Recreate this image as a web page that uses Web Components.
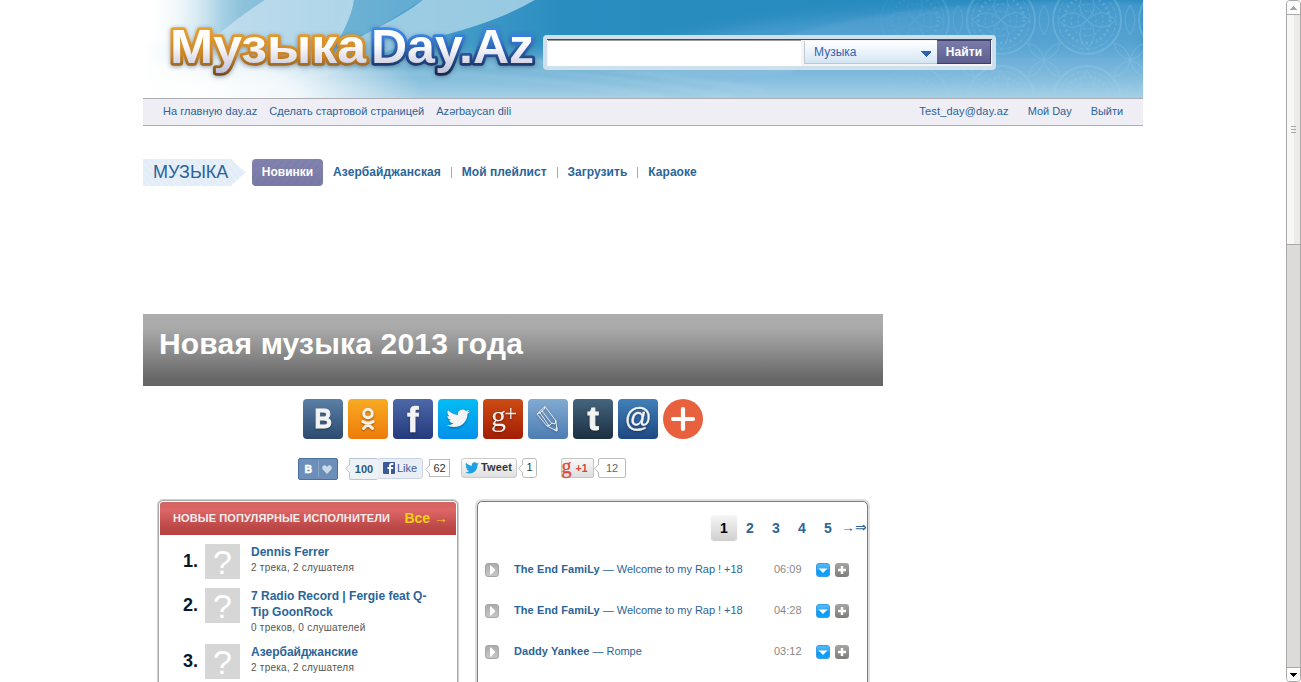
<!DOCTYPE html>
<html lang="ru">
<head>
<meta charset="utf-8">
<title>Новая музыка 2013 года</title>
<style>
html,body{margin:0;height:100%;overflow:hidden;background:#fff}
body{font:11px "Liberation Sans",Arial,sans-serif;color:#2b6498}
</style>
</head>
<body>
<music-page></music-page>
<script>
const BIRD='M23.953 4.57a10 10 0 01-2.825.775 4.958 4.958 0 002.163-2.723c-.951.555-2.005.959-3.127 1.184a4.92 4.92 0 00-8.384 4.482C7.69 8.095 4.067 6.13 1.64 3.162a4.822 4.822 0 00-.666 2.475c0 1.71.87 3.213 2.188 4.096a4.904 4.904 0 01-2.228-.616v.06a4.923 4.923 0 003.946 4.827 4.996 4.996 0 01-2.212.085 4.936 4.936 0 004.604 3.417 9.867 9.867 0 01-6.102 2.105c-.39 0-.779-.023-1.17-.067a13.995 13.995 0 007.557 2.209c9.053 0 13.998-7.496 13.998-13.985 0-.21 0-.42-.015-.63A9.935 9.935 0 0024 4.59z';

function define(name, html){
  customElements.define(name, class extends HTMLElement{
    constructor(){
      super();
      const t=document.createElement('template');
      t.innerHTML=typeof html==='function'?html(this):html;
      this.attachShadow({mode:'open'}).append(t.content.cloneNode(true));
    }
  });
}

define('site-banner',`
<style>
:host{display:grid;height:98px;width:1000px}
:host>*{grid-area:1/1}
.front{display:flex;align-items:flex-start}
.logo{flex:none;display:block;width:400px;height:98px;overflow:visible}
svg{display:block}
</style>
<svg width="1000" height="98" viewBox="0 0 1000 98">
<defs>
<linearGradient id="base"><stop offset="0" stop-color="#fff"/><stop offset=".04" stop-color="#d5eaf3"/><stop offset=".1" stop-color="#8cc2dc"/><stop offset=".28" stop-color="#4a9fcb"/><stop offset=".42" stop-color="#2a8dc0"/><stop offset="1" stop-color="#2489bd"/></linearGradient>
<linearGradient id="low" x1="0" y1="0" x2="0" y2="1"><stop offset="0" stop-color="#3f9bca" stop-opacity="0"/><stop offset=".4" stop-color="#3f9bca" stop-opacity="0"/><stop offset=".62" stop-color="#7fbad9" stop-opacity=".7"/><stop offset="1" stop-color="#a6d0e5"/></linearGradient>
<linearGradient id="right" x1="0" y1="0" x2="0" y2="1"><stop offset="0" stop-color="#4c9dd0"/><stop offset=".5" stop-color="#66abd8"/><stop offset=".8" stop-color="#86bee0"/><stop offset="1" stop-color="#a8d2e7"/></linearGradient>
<linearGradient id="fade"><stop offset="0" stop-color="#fff"/><stop offset=".3" stop-color="#fff" stop-opacity=".7"/><stop offset="1" stop-color="#fff" stop-opacity="0"/></linearGradient>
<linearGradient id="mfade"><stop offset="0" stop-color="#fff" stop-opacity="0"/><stop offset=".35" stop-color="#fff" stop-opacity=".7"/><stop offset="1" stop-color="#fff"/></linearGradient>
<radialGradient id="glow"><stop offset="0" stop-color="#fff"/><stop offset=".45" stop-color="#fff" stop-opacity=".85"/><stop offset="1" stop-color="#fff" stop-opacity="0"/></radialGradient>
<mask id="m"><rect x="720" width="280" height="98" fill="url(#mfade)"/></mask>
<filter id="b" x="-20%" y="-50%" width="140%" height="200%"><feGaussianBlur stdDeviation="7"/></filter>
<filter id="b2" x="-20%" y="-50%" width="140%" height="200%"><feGaussianBlur stdDeviation="2"/></filter>
<pattern id="orn" width="86" height="80" x="815" y="-20" patternUnits="userSpaceOnUse">
<g fill="none" stroke="#9dd3e8" stroke-width="1">
<circle cx="43" cy="40" r="34" stroke-width="2"/><circle cx="43" cy="40" r="29" stroke-dasharray="5 2"/><circle cx="43" cy="40" r="16" stroke-dasharray="3 2"/><circle cx="43" cy="40" r="9" stroke-dasharray="3 2"/><circle cx="43" cy="40" r="23" stroke-dasharray="2 3" stroke-width="3"/>
<path d="M43 11Q58 26 43 40Q28 26 43 11M43 69Q58 54 43 40Q28 54 43 69M14 40Q28 25 43 40Q28 55 14 40M72 40Q58 25 43 40Q58 55 72 40M0 0Q14 4 16 17Q3 14 0 0M86 0Q72 4 70 17Q83 14 86 0M0 80Q14 76 16 63Q3 66 0 80M86 80Q72 76 70 63Q83 66 86 80M0 25Q10 40 0 55M86 25Q76 40 86 55"/>
</g></pattern>
</defs>
<rect width="1000" height="98" fill="url(#base)"/>
<path d="M205 -2H282L236 27Q200 60 190 98H60Q190 60 205 -2Z" fill="#6fb4d6" opacity=".6"/>
<path d="M282 -2H395Q350 26 262 44L130 98Q190 50 236 27Q266 12 282 -2Z" fill="#a9d4e8" opacity=".85"/>
<path d="M78 32Q105 10 125 -2H211Q210 16 192 46Q150 82 100 98H0V60Z" fill="#cfe6f2" opacity=".7"/>
<rect width="1000" height="98" fill="url(#low)"/>
<path d="M520 44Q640 14 770 9Q880 2 1000 2V98H520Z" fill="url(#right)" opacity=".55" filter="url(#b)"/>
<path d="M640 36Q740 9 860 4Q940 0 1000 3V98H560Z" fill="url(#right)" opacity=".6" filter="url(#b2)"/>
<g fill="none" stroke="#b8dbea" stroke-width="3" opacity=".3" filter="url(#b2)"><path d="M230 50Q400 58 620 90M250 62Q420 65 590 98M150 75Q350 65 520 98M390 60Q500 78 650 70"/></g>
<rect x="720" width="280" height="98" fill="url(#orn)" mask="url(#m)" opacity=".3"/>
<ellipse cx="50" cy="92" rx="230" ry="60" fill="url(#glow)"/>
<rect width="80" height="98" fill="url(#fade)"/>
</svg>
<div class="front">
<svg class="logo" viewBox="0 0 400 98" font-family="Liberation Sans" font-weight="700" font-size="48">
<defs>
<linearGradient id="o" gradientUnits="userSpaceOnUse" x1="0" y1="25" x2="0" y2="76"><stop offset="0" stop-color="#f0a32e"/><stop offset=".6" stop-color="#c98427"/><stop offset="1" stop-color="#6f4a18"/></linearGradient>
<linearGradient id="bl" gradientUnits="userSpaceOnUse" x1="0" y1="25" x2="0" y2="76"><stop offset="0" stop-color="#3e8ef5"/><stop offset=".3" stop-color="#3579d4"/><stop offset=".75" stop-color="#1c3d78"/><stop offset="1" stop-color="#14264c"/></linearGradient>
<linearGradient id="w" gradientUnits="userSpaceOnUse" x1="0" y1="28" x2="0" y2="74"><stop offset="0" stop-color="#fff"/><stop offset=".35" stop-color="#fff"/><stop offset="1" stop-color="#bdbdd8"/></linearGradient>
<filter id="s" x="-10%" y="-20%" width="120%" height="150%"><feDropShadow dx="0" dy="1" stdDeviation="2" flood-color="#345" flood-opacity=".5"/></filter>
</defs>
<g filter="url(#s)" stroke-width="5.500" stroke-linejoin="round" fill="url(#w)" paint-order="stroke">
<text x="27" y="63" textLength="196" lengthAdjust="spacingAndGlyphs" stroke="url(#o)">Музыка</text>
<text x="228" y="63" textLength="163" lengthAdjust="spacingAndGlyphs" stroke="url(#bl)">Day.Az</text>
</g>
</svg>
<search-bar></search-bar>
</div>`);

define('search-bar',`
<style>
:host{display:flex;box-sizing:border-box;width:453px;height:35px;margin-top:35px;padding:4px;background:#cfdfeb;border-radius:4px}
.in{display:flex;width:445px;height:27px;box-sizing:border-box;border-top:1px solid #4a4a4a;background:#f4f4f4;align-items:flex-start}
.field{width:253px;height:26px;margin-left:1px;background:#fff;border-top:1px solid #9b9b9b;box-sizing:border-box}
.sel{display:flex;align-items:center;justify-content:space-between;box-sizing:border-box;width:133px;height:23px;margin:1px 0 0 3px;padding:0 6px 0 9px;border:1px solid #bcc8d2;border-width:0 0 1px 1px;background:linear-gradient(#fff,#e9f3fb 50%,#d3e5f3);font-size:12px;color:#3562b0}
.sel svg{margin-top:4px}
.go{width:54px;height:24px;box-sizing:border-box;border:1px solid #3e3f66;border-width:1px 1px 1px 0;background:linear-gradient(#7a7bab,#5c5f8e);color:#fff;font-weight:700;font-size:12px;line-height:23px;text-align:center;letter-spacing:.1px;padding-left:1px}
</style>
<div class="in"><div class="field"></div><div class="sel"><span>Музыка</span><svg width="10" height="6" shape-rendering="crispEdges"><path d="M0 0H10V1L5 6L0 1Z" fill="#2a62b4"/></svg></div><div class="go">Найти</div></div>`);

define('top-links',`
<style>
:host{display:flex;justify-content:space-between;box-sizing:border-box;height:28px;padding:0 20px;border:solid #aeaeb2;border-width:1px 0;background:#efeef5;line-height:25px}
div{display:flex;gap:12px;letter-spacing:.03px}div+div{gap:19px;letter-spacing:-.04px}
.m{letter-spacing:.18px}
</style>
<div><span>На главную day.az</span><span>Сделать стартовой страницей</span><span>Azərbaycan dili</span></div>
<div><span class="m">Test_day@day.az</span><span>Мой Day</span><span>Выйти</span></div>`);

define('section-nav',`
<style>
:host{display:flex;height:27px;margin-top:33px;line-height:26px;font-weight:700;font-size:12px}
.h{width:103px;box-sizing:border-box;padding-left:10px;font-size:18px;font-weight:400;background:repeating-linear-gradient(50deg,#ffffff44 0 1px,transparent 1px 5px),#e3edf8;clip-path:polygon(0 0,88px 0,91px 3px,100% 50%,91px 24px,88px 100%,0 100%)}
.on{width:71px;margin-left:6px;text-align:center;color:#fff;border-radius:4px;background:repeating-linear-gradient(130deg,#66669433 0 1px,transparent 1px 6px),linear-gradient(#8283ad,#7879a6)}
nav{display:flex;align-items:center;height:26px;padding-left:10px;letter-spacing:.03px}
nav span:first-child{letter-spacing:.09px}
i{width:1px;height:11px;background:#aaa;margin:0 10px}
</style>
<div class="h">МУЗЫКА</div><div class="on">Новинки</div>
<nav><span>Азербайджанская</span><i></i><span>Мой плейлист</span><i></i><span>Загрузить</span><i></i><span>Караоке</span></nav>`);

define('page-title',`
<style>
:host{display:block;box-sizing:border-box;width:740px;height:72px;margin-top:128px;padding-left:16px;background:linear-gradient(#adadad 0,#a9a9a9 20%,#8e8e8e 50%,#696969 88%,#666);color:#fff;font:700 30px/60px "Liberation Sans",sans-serif;letter-spacing:.18px}
</style><slot></slot>`);

const art={
 vk:['#5b7fa6','#2c4a70','<text x="11.500" y="29" font-weight="700" font-size="27" textLength="17.500" lengthAdjust="spacingAndGlyphs" stroke="#f3f3f3" stroke-width="1">B</text>'],
 ok:['#f8ab22','#ee7b0a','<g fill="none" stroke="#f6f1ea" stroke-width="3" stroke-linecap="round"><circle cx="20" cy="14.500" r="4.300"/><path d="M14.800 22.500Q20 26 25.200 22.500M20 25L15.500 29.500M20 25L24.500 29.500"/></g>'],
 fb:['#4d68a8','#243a7c','<text x="14" y="33" font-weight="700" font-size="35" stroke="#f3f3f3" stroke-width=".6">f</text>'],
 tw:['#02bdf4','#0390ea',`<path transform="translate(8.500 8.500) scale(.97 .9)" d="${BIRD}"/>`],
 gp:['#cd4c14','#a31d04','<text x="8" y="27" font-family="Liberation Serif" font-size="30">g</text><path d="M22.500 14.500H33M27.800 9V20" stroke="#eee" stroke-width="1.300"/>'],
 lj:['#82abd2','#4c7cb2','<path d="M9 15L17 7.500L28 22L29 32L19 27Z M9 15Q13 14 14 12Q17 11 17 7.500M11.500 13L21 27L24 24L27 25L28 21M14 12L24 25M19 27L21.500 26M26.500 31L29 28.500V32Z" fill="none" stroke="#f2f6fa" stroke-width=".9"/>'],
 tu:['#45657d','#1b2f42','<text x="14.500" y="31" font-weight="700" font-size="34" stroke="#f3f3f3" stroke-width="1">t</text>'],
 mail:['#4280b9','#1d4882','<text x="6.500" y="28" font-size="27" stroke="#f3f3f3" stroke-width=".3">@</text>'],
 more:['#e8613f','#e8613f','<path d="M20 10V30M10 20H30" stroke="#fff" stroke-width="4.200" stroke-linecap="round"/>']
};
define('share-tile',el=>{
 const k=el.getAttribute('kind'),[a,b,g]=art[k];
 return `<style>:host{display:block;width:40px;height:40px;border-radius:${k==='more'?20:4}px;background:linear-gradient(${a},${b})}svg{display:block;overflow:visible;font-family:"Liberation Sans";filter:${k==='more'?'none':'drop-shadow(0 1px 1px #0005)'}}</style><svg width="40" height="40" fill="#f3f3f3">${g}</svg>`;
});

define('share-row',`
<style>:host{display:flex;gap:5px;padding-left:160px;margin-top:13px}</style>
${Object.keys(art).map(k=>`<share-tile kind="${k}"></share-tile>`).join('')}`);

define('count-bubble',`
<style>
:host{display:block;position:relative;box-sizing:border-box;border:1px solid #bbb;background:#fff;text-align:center;color:#333;border-radius:var(--r,2px)}
svg{position:absolute;left:-5px;top:5px}
</style><svg width="5" height="9"><path d="M5 0L.7 4.500L5 9" fill="var(--bg,#fff)" stroke="var(--bd,#bbb)"/></svg><slot></slot>`);

define('like-row',`
<style>
:host{display:flex;align-items:flex-start;padding-left:155px;margin-top:19px;height:22px}
:host>*{box-sizing:border-box;flex:none}
svg{display:block;flex:none;overflow:visible}
.vk{width:40px;height:22px;border:1px solid #4a71a1;border-radius:2px;background:#6b8fb8}
.c1{width:29px;height:22px;margin-left:11px;line-height:20px;font-weight:700;color:#2b587a;background:#edf2f7;border-color:#b9c7d5;border-right:0;--bg:#edf2f7;--bd:#b9c7d5}
.fb{display:flex;align-items:center;gap:2px;width:46px;height:21px;padding-left:5px;margin-left:-1px;border:1px solid #cad4e7;border-radius:3px;background:#eceef5;color:#3b5998}
.fb svg{margin-top:-1px}.fb span{margin-top:-1px}
.c2{width:21px;height:18px;margin:1px 0 0 6px;line-height:16px;--r:0}
.tw{display:flex;align-items:center;gap:2px;width:56px;height:20px;margin-left:11px;padding-left:3px;border:1px solid #ccc;border-radius:3px;background:linear-gradient(#fff,#dedede);color:#333;font-weight:700;padding-bottom:2px}
.tw span{letter-spacing:.15px}
.c3{width:15px;height:20px;margin-left:5px;line-height:17px;--r:3px}
.gp{width:33px;height:20px;margin-left:24px;border:1px solid #c4c4c4;border-radius:2px;background:linear-gradient(#f8f8f8,#dedede)}
.c4{width:28px;height:20px;margin-left:4px;line-height:19px;color:#666;--r:2px}
</style>
<div class="vk"><svg width="38" height="20"><text x="5.500" y="14" font-weight="700" font-size="10.500" fill="#fff" stroke="#fff" stroke-width=".4">B</text><path d="M19.500 2V18" stroke="#87a5c6"/><path d="M28 15L23.700 10.500Q22.300 8 24.500 6.500Q27 5.500 28 8Q29 5.500 31.500 6.500Q33.700 8 32.300 10.500Z" fill="#ccd9e6"/></svg></div>
<count-bubble class="c1">100</count-bubble>
<div class="fb"><svg width="12" height="12"><rect width="12" height="12" rx="1" fill="#3b5998"/><path d="M8 12V7H10L10.300 5H8V4Q8 3 9 3H10.400V1H8.600Q6 1 6 4V5H4.400V7H6V12Z" fill="#fff"/></svg><span>Like</span></div>
<count-bubble class="c2">62</count-bubble>
<div class="tw"><svg width="14" height="12" viewBox="0 0 24 21"><path d="${BIRD}" fill="#1ea1e1"/></svg><span>Tweet</span></div>
<count-bubble class="c3">1</count-bubble>
<div class="gp"><svg width="31" height="18"><text x="-.5" y="14" font-family="Liberation Serif" font-size="20" fill="#dc4a38" stroke="#dc4a38" stroke-width=".3">g</text><text x="13.500" y="13" font-weight="700" font-size="10.500" fill="#d14836">+1</text></svg></div>
<count-bubble class="c4">12</count-bubble>`);

define('artist-item',el=>`
<style>
:host{display:flex;padding:0 20px 9px 0}
b{width:38px;flex:none;text-align:right;font-size:18px;line-height:34px;color:#08182a}
.ph{width:35px;height:35px;margin:0 11px 0 7px;flex:none;background:#d6d6d6;color:#fff;font-size:34px;line-height:37px;text-align:center}
.n{font-weight:700;font-size:12px;line-height:16px}.s{font-size:10px;line-height:15px;color:#555;letter-spacing:.24px}
</style><b>${el.getAttribute('no')}.</b><div class="ph">?</div><div><div class="n"><slot></slot></div><div class="s">${el.getAttribute('info')}</div></div>`);

define('artists-panel',`
<style>
:host{display:block;box-sizing:border-box;width:300px;height:220px;border:1px solid #aaa;border-radius:5px;box-shadow:0 0 0 1px #d0d0d0;padding:1px;background:#fff}
header{display:flex;justify-content:space-between;height:33px;padding:0 8px 0 13px;line-height:32px;border-radius:3px 3px 0 0;background:linear-gradient(#d06463,#dc6766 25%,#bd4848 75%,#b64343);color:#f6eded;font-weight:700;letter-spacing:.12px}
header span+span{font-size:14px;color:#f4cf14;letter-spacing:0}
.l{padding-top:9px}
</style>
<header><span>НОВЫЕ ПОПУЛЯРНЫЕ ИСПОЛНИТЕЛИ</span><span>Все →</span></header>
<div class="l"><artist-item no="1" info="2 трека, 2 слушателя">Dennis Ferrer</artist-item>
<artist-item no="2" info="0 треков, 0 слушателей">7 Radio Record | Fergie feat Q-Tip GoonRock</artist-item>
<artist-item no="3" info="2 трека, 2 слушателя">Азербайджанские</artist-item></div>`);

define('track-row',el=>`
<style>
:host{display:flex;align-items:center;height:41px;padding-left:7px}
svg{display:block;flex:none}.n{width:275px;padding-left:15px;box-sizing:border-box;letter-spacing:-.04px}.t{width:42px;color:#888}
.n,.t{padding-bottom:1px}b{letter-spacing:.09px}
</style>
<svg width="14" height="14"><defs><linearGradient id="p" x2="0" y2="1"><stop stop-color="#a9aba9"/><stop offset="1" stop-color="#c8c9c8"/></linearGradient></defs><rect x=".5" y=".5" width="13" height="13" rx="2.500" fill="url(#p)" stroke="#a4a7a4"/><path d="M5 2.500H6L10 6.500V7.500L6 11.500H5Z" fill="#fff"/></svg>
<div class="n"><b>${el.getAttribute('artist')}</b> — ${el.getAttribute('song')}</div><div class="t">${el.getAttribute('time')}</div>
<svg width="33" height="14"><defs><linearGradient id="a" x2="0" y2="1"><stop stop-color="#56bbfa"/><stop offset=".5" stop-color="#2aa6fa"/><stop offset=".5" stop-color="#0799fb"/><stop offset="1" stop-color="#10a5ff"/></linearGradient><linearGradient id="g" x2="0" y2="1"><stop stop-color="#a6a6a4"/><stop offset="1" stop-color="#7c7c79"/></linearGradient></defs>
<rect x=".5" y=".5" width="13" height="13" rx="2.500" fill="url(#a)" stroke="#3a9fe0"/><path d="M2.500 5.500H11.500L7 10Z" fill="#fff"/>
<rect x="19" width="14" height="14" rx="3" fill="url(#g)"/><path d="M26 3V11M22 7H30" stroke="#fff" stroke-width="2.400"/></svg>`);

define('tracks-panel',`
<style>
:host{display:block;box-sizing:border-box;width:391px;height:220px;margin:1px 0 0 19px;border:1px solid #7c7c7c;border-radius:5px;box-shadow:0 0 0 2px #dedede;background:#fff}
.pg{display:flex;justify-content:flex-end;height:26px;padding:13px 0 8px;font-weight:700;font-size:14px;line-height:26px}
.pg span{width:26px;text-align:center}.pg .on{color:#000;border-radius:3px;background:linear-gradient(#f6f6f6,#d0d0d0);box-shadow:0 1px 1px #ccc;height:25px}
.pg .ar{width:26px;font-weight:400;font-size:13.500px;white-space:nowrap}
</style>
<div class="pg"><span class="on">1</span><span>2</span><span>3</span><span>4</span><span>5</span><span class="ar">→⇒</span></div>
<track-row artist="The End FamiLy" song="Welcome to my Rap ! +18" time="06:09"></track-row>
<track-row artist="The End FamiLy" song="Welcome to my Rap ! +18" time="04:28"></track-row>
<track-row artist="Daddy Yankee" song="Rompe" time="03:12"></track-row>`);

define('page-scrollbar',`
<style>
:host{display:flex;flex-direction:column;box-sizing:border-box;width:15px;height:682px;border:1px solid #aaa8a6;border-radius:4px;background:#dddbda;overflow:hidden}
div{display:flex;align-items:center;justify-content:center;box-sizing:border-box;background:#fdfdfd}
.u{height:14px;border-bottom:1px solid #aaa8a6}.d{height:14px;border-top:1px solid #aaa8a6;margin-top:auto}
.th{height:230px;border-bottom:1px solid #aaa8a6;background:linear-gradient(90deg,#f7f7f5 50%,#ebebe9 50%)}
</style>
<div class="u"><svg width="7" height="4" shape-rendering="crispEdges"><path d="M0 4L3 0H4L7 4Z" fill="#aaa8a6"/></svg></div>
<div class="th"><svg width="5" height="7" shape-rendering="crispEdges"><path d="M0 .5H5M0 3.500H5M0 6.500H5" stroke="#aaa8a6"/></svg></div>
<div class="d"><svg width="7" height="4" shape-rendering="crispEdges"><path d="M0 0H7L4 4H3Z" fill="#000"/></svg></div>`);

define('music-page',`
<style>
:host{display:flex;width:1301px;height:682px;overflow:hidden}
main{width:1000px;margin:0 auto}
.cols{display:flex;align-items:flex-start;padding-left:15px;margin-top:20px}
</style>
<main><site-banner></site-banner><top-links></top-links><section-nav></section-nav><page-title>Новая музыка 2013 года</page-title><share-row></share-row><like-row></like-row>
<div class="cols"><artists-panel></artists-panel><tracks-panel></tracks-panel></div></main>
<page-scrollbar></page-scrollbar>`);
</script>
</body>
</html>
